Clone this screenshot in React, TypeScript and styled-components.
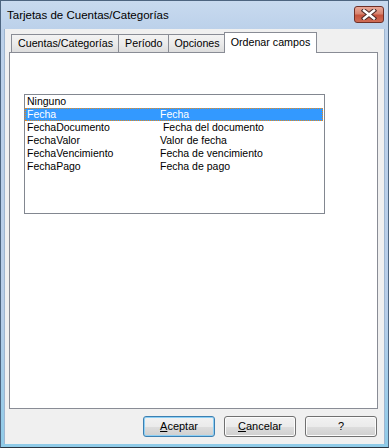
import React from "react";
import styled, { createGlobalStyle } from "styled-components";

const rows: [string, string, boolean?][] = [
  ["Ninguno", ""],
  ["Fecha", "Fecha", true],
  ["FechaDocumento", " Fecha del documento"],
  ["FechaValor", "Valor de fecha"],
  ["FechaVencimiento", "Fecha de vencimiento"],
  ["FechaPago", "Fecha de pago"],
];

const tabs = ["Cuentas/Categorías", "Período", "Opciones", "Ordenar campos"];

export default function App() {
  return (
    <>
      <GlobalStyle />
      <Window>
        <TitleBar>
          <Title>Tarjetas de Cuentas/Categorías</Title>
          <CloseButton>
            <svg width="16" height="11" viewBox="0 0 16 11">
              <path
                d="M3 1.5 L13 9.5 M13 1.5 L3 9.5"
                stroke="#4a2a28"
                strokeWidth="4.4"
                strokeLinecap="square"
              />
              <path
                d="M3 1.5 L13 9.5 M13 1.5 L3 9.5"
                stroke="#ffffff"
                strokeWidth="2.4"
                strokeLinecap="square"
              />
            </svg>
          </CloseButton>
        </TitleBar>
        <Client>
          <TabRow>
            {tabs.map((t, i) => (
              <Tab key={t} $active={i === 3}>
                {t}
              </Tab>
            ))}
          </TabRow>
          <Panel>
            <ListBox>
              {rows.map(([a, b, sel]) => (
                <Row key={a} $selected={!!sel}>
                  <Cell>{a}</Cell>
                  <Cell>{b}</Cell>
                </Row>
              ))}
            </ListBox>
          </Panel>
          <ButtonRow>
            <Button $default>
              <u>A</u>ceptar
            </Button>
            <Button>
              <u>C</u>ancelar
            </Button>
            <Button>?</Button>
          </ButtonRow>
        </Client>
      </Window>
    </>
  );
}

const GlobalStyle = createGlobalStyle`
  body {
    margin: 0;
    background: #ffffff;
    font-family: "Liberation Sans", Arial, sans-serif;
  }
`;

const Window = styled.div`
  width: 389px;
  height: 448px;
  box-sizing: border-box;
  border: 1px solid #4d6580;
  border-bottom-color: #2a3440;
  background: linear-gradient(to bottom, #c8daef 0, #bcd1ea 28px, #b7cde8 70%, #8fcbe8 100%);
  display: flex;
  flex-direction: column;
`;

const TitleBar = styled.div`
  height: 28px;
  display: flex;
  align-items: flex-start;
  justify-content: space-between;
`;

const Title = styled.span`
  font-size: 11.5px;
  line-height: 28px;
  padding-left: 6px;
  color: #000000;
`;

const CloseButton = styled.div`
  width: 30px;
  height: 17px;
  margin: 5px 4px 0 0;
  box-sizing: border-box;
  border: 1px solid #6e3028;
  border-radius: 3px;
  background: linear-gradient(to bottom, #e8a898 0, #d78470 45%, #c5533d 55%, #cf6c55 100%);
  display: flex;
  align-items: center;
  justify-content: center;
`;

const Client = styled.div`
  flex: 1;
  margin: 0 3px 3px;
  background: #f0f0f0;
  border-left: 1px solid #9fb6d0;
  border-right: 1px solid #9fb6d0;
  display: flex;
  flex-direction: column;
  padding: 3px 6px 7px 4px;
`;

const TabRow = styled.div`
  height: 20px;
  display: flex;
  align-items: flex-end;
  padding-left: 2px;
`;

const Tab = styled.div<{ $active?: boolean }>`
  position: relative;
  z-index: ${(p) => (p.$active ? 2 : 1)};
  box-sizing: border-box;
  height: ${(p) => (p.$active ? "21px" : "18px")};
  margin: ${(p) => (p.$active ? "0 -2px -1px" : "0")};
  padding: ${(p) => (p.$active ? "0 6px" : "0 5px 0 6px")};
  border: 1px solid #898c95;
  border-bottom: none;
  border-left-width: ${(p) => (p.$active ? "1px" : "0")};
  &:first-child {
    border-left-width: 1px;
  }
  background: ${(p) =>
    p.$active ? "#ffffff" : "linear-gradient(to bottom, #f3f3f3 0, #ebebeb 50%, #dddddd 100%)"};
  font-size: 10.7px;
  line-height: ${(p) => (p.$active ? "18px" : "17px")};
  color: #000000;
  white-space: nowrap;
`;

const Panel = styled.div`
  height: 357px;
  box-sizing: border-box;
  border: 1px solid #898c95;
  background: #ffffff;
  padding: 41px 0 0 14px;
`;

const ListBox = styled.div`
  width: 301px;
  height: 120px;
  box-sizing: border-box;
  border: 1px solid #828790;
  background: #ffffff;
  padding: 0;
`;

const Row = styled.div<{ $selected?: boolean }>`
  height: 13px;
  display: grid;
  grid-template-columns: 133px 1fr;
  padding-left: 2px;
  font-size: 10.5px;
  line-height: 13px;
  color: ${(p) => (p.$selected ? "#ffffff" : "#000000")};
  background: ${(p) => (p.$selected ? "#3399ff" : "transparent")};
  outline: ${(p) => (p.$selected ? "1px dotted #e8891a" : "none")};
  outline-offset: -1px;
  margin-right: 1px;
`;

const Cell = styled.span`
  white-space: pre;
`;

const ButtonRow = styled.div`
  margin-top: 7px;
  display: flex;
  justify-content: flex-end;
  gap: 9px;
  padding-right: 1px;
`;

const Button = styled.div<{ $default?: boolean }>`
  width: 72px;
  height: 21px;
  box-sizing: border-box;
  border: 1px solid ${(p) => (p.$default ? "#3c7fb1" : "#707070")};
  border-radius: 3px;
  background: linear-gradient(to bottom, #f2f2f2 0, #ebebeb 50%, #dddddd 51%, #cfcfcf 100%);
  box-shadow: ${(p) => (p.$default ? "inset 0 0 0 1px #8ed0f5" : "inset 0 0 0 1px #fcfcfc")};
  font-size: 11px;
  line-height: 19px;
  text-align: center;
  color: #000000;
`;
